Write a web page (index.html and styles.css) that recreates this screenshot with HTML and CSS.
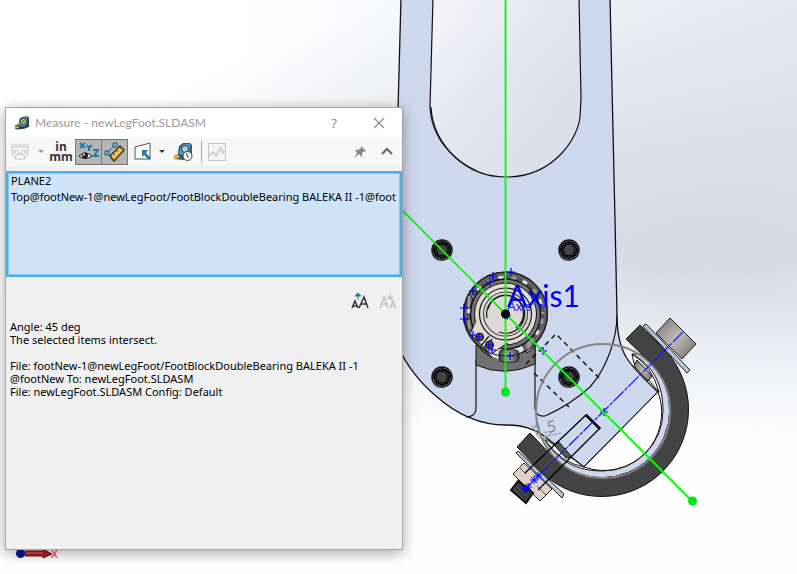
FILE: index.html
```html
<!DOCTYPE html>
<html lang="en">
<head>
<meta charset="utf-8">
<title>Measure - newLegFoot.SLDASM</title>
<link rel="stylesheet" href="styles.css">
</head>
<body>
<main class="viewport">
  <svg class="model" viewBox="0 0 797 574" preserveAspectRatio="xMinYMin slice" role="img" aria-label="Leg and foot assembly">
    <defs>
      <linearGradient id="metal" x1="0" y1="0" x2="1" y2="1"><stop offset="0" stop-color="#766f6c"/><stop offset=".5" stop-color="#c0b9b5"/><stop offset="1" stop-color="#6f6967"/></linearGradient>
      <linearGradient id="slot" x1="0" y1="0" x2="1" y2="1"><stop offset="0" stop-color="#f5f5f8"/><stop offset=".5" stop-color="#e2e5ee"/><stop offset="1" stop-color="#d9dce7"/></linearGradient>
      <linearGradient id="ball"><stop offset="0" stop-color="#3c3c3c"/><stop offset=".5" stop-color="#a5a5a5"/><stop offset="1" stop-color="#3c3c3c"/></linearGradient>
      <g id="screw">
        <circle r="10" fill="#cfd8ee" stroke="#111" stroke-width="1.5"/>
        <circle r="8" fill="#333" stroke="#000" stroke-width="2"/>
        <path d="M-3-5.5H3L6 0 3 5.500H-3L-6 0Z" fill="#444" stroke="#080808"/>
        <path d="M-10 3l2 5M-8 7l2 3M-5 10l2 1" stroke="#555" stroke-dasharray="1 1"/>
      </g>
      <path id="plus" d="M-4 0H4M0-4V4" stroke="#00f" stroke-width="1.200"/>
      <g id="star" stroke="#00f"><path d="M-4 0H4M0-4V4M-3-3 3 3M3-3-3 3"/></g>
    </defs>

    <path class="plate" d="M401-2 398 110V346C405 363 419 382 436 396C456 414 478 425 506 425C522 425 534 428 548 439L584 467 658 392C645 380 635 370 628 360C621 350 617 335 617 315L615 220 610-2Z"/>
    <path d="M433-2 430 107C431 126 439 143 455 157C470 171 486 177 506 177C529 177 548 168 562 153C573 141 579 127 580 117L581 98 579-2Z" fill="url(#slot)" stroke="#111" stroke-width="1.200"/>
    <path d="M431 107C432 127 440 143 456 158C463 164 470 168 477 171" class="edge"/>
    <path class="edge" d="M476 360V408Q476 417 466 417"/>
    <path class="edge" d="M535 335V407Q535 417 545 416Q570 405 590 387C607 368 617 338 617 315"/>

    <path d="M476 345V365Q505 378 535 364V340Z" fill="#707070" stroke="#111"/>
    <circle cx="505.500" cy="314" r="46" fill="none" stroke="#9299aa" stroke-width=".5" stroke-dasharray="1 11"/>
    <circle cx="505.500" cy="314" r="42" fill="#555" stroke="#111" stroke-width="1.200"/>
    <circle cx="505.500" cy="314" r="37" fill="none" stroke="#dce1ec" stroke-width="5" stroke-dasharray="5 20" stroke-dashoffset="8"/>
    <circle cx="505.500" cy="314" r="37" fill="none" stroke="#999" stroke-width="5" stroke-dasharray="5 20" stroke-dashoffset="20"/>
    <circle cx="505.500" cy="314" r="39.500" fill="none" stroke="#666" stroke-width="2"/>
    <path d="M479 345Q505 377 534 339L523 336Q507 350 487 342Z" fill="#dce0e8"/>
    <g stroke="#222"><rect x="499" y="350" width="20" height="12" rx="4" fill="url(#ball)"/><path d="M522 345 530 338 536 344Q532 350 527 353Z" fill="url(#ball)"/><path d="M465 319H471L473 330H468Z" fill="url(#ball)"/><path d="M468 294 473 298 470 308H465Z" fill="url(#ball)"/><path d="M478 345 486 350 492 358 482 351Z" fill="#555"/></g>
    <circle cx="505.500" cy="314" r="35" fill="#747474" stroke="#111" stroke-width="1.300"/>
    <circle cx="505.500" cy="314" r="42" fill="none" stroke="#222"/>
    <circle cx="505.500" cy="314" r="31" fill="#ded9d5" stroke="#111"/>
    <path d="M476 321 470 334 491 354 508 342 490 322Z" fill="#ded9d5"/>
    <path d="M476 321 470 334 491 354 508 343" fill="none" stroke="#222"/>
    <path d="M480 347 489 336M483 349 492 339" stroke="#222" stroke-width="1.300"/>
    <g fill="none" stroke="#151515" stroke-width="1.200">
      <circle cx="505.500" cy="314" r="26"/><circle cx="505.500" cy="314" r="22" stroke="#4a4a4a"/>
      <path d="M487 318A19 19 0 1 1 499 332M488 309A18 18 0 1 1 516 328"/>
    </g>
    <g fill="#555" stroke="#111"><circle cx="479.500" cy="337" r="4"/><circle cx="489.500" cy="345" r="4"/></g>

    <use href="#screw" x="442" y="250"/><use href="#screw" x="569" y="250"/>
    <use href="#screw" x="442" y="377"/><use href="#screw" x="569" y="377"/>
    <path d="M526 364 556 334 600 379M534 373 569 407" class="edge hidden"/>

    <path d="M658 392A58 58 0 0 1 584 467Z" fill="#fdfdfe" stroke="#111"/>
    <path d="M632 354Q652 366 659 392L634 363Z" fill="#f2f3f8" stroke="#111"/>
    <path d="M547 440 584 467Q561 463 545 440Z" fill="#f5f6fa" stroke="#111"/>
    <path d="M637 360 652 376 648 381 634 366Z" fill="url(#metal)" stroke="#111"/>
    <path d="M558 441 572 457 566 458 554 445Z" fill="#555" stroke="#111"/>
    <path d="M632 354C653 365 663 384 663 411A60 60 0 0 1 603 471C576 471 558 461 545 440L540 436 555 459A67.900 67.900 0 0 0 651 363L641 354Z" fill="#cdd7ed" stroke="#171717"/>
    <path d="M640 325 664.500 349.500A87 87 0 0 1 541.500 472.500L517 447 530 433 555 459A67.900 67.900 0 0 0 651 363L626 339Z" fill="#444" stroke="#111"/>
    <circle cx="603" cy="411" r="67" fill="none" stroke="#858585" stroke-width="2"/>

    <path d="M670 318 696 344 682 359 656 333Z" fill="url(#metal)" stroke="#222"/>
    <path d="M643 326 646 324 690 370 687 373Z" fill="#b8c4da" stroke="#222"/>
    <path d="M524 463 513 474 540 501 552 489Z" fill="#ded2cb" stroke="#222"/>
    <path d="M518 481 511 490 526 503 533 493Z" fill="#3c3c3c" stroke="#111" stroke-width="2"/>
    <path d="M519 467 526 474M537 486 546 495M517 487 526 496M514 489 523 499" stroke="#555"/>
    <path d="M518 451 564 494 562 498 516 453Z" fill="#b8c4da" stroke="#222"/>
    <path d="M525 473 586 415 600 428 538 490" fill="none" stroke="#000" stroke-width="1.300"/>
    <path d="M586 415 600 429" stroke="#000" stroke-width="2.500"/>
    <path d="M532 425l6 12M538 438l23-5M544 440l9-10" fill="none" stroke="#999"/>
    <text class="dimension" x="534" y="434" transform="rotate(-10 541 430)">1.5</text>
    <path d="M524 490 604 411 683 332" stroke="#1414f5" stroke-width="1.200" stroke-dasharray="14 2 3 2"/>

    <text class="axis-small" x="507" y="311">Axis</text>
    <text class="axis" x="507" y="307">Axis1</text>
    <g>
      <use href="#plus" x="511" y="272"/><use href="#plus" x="493" y="276"/><use href="#plus" x="490" y="282"/><use href="#plus" x="473" y="291"/><use href="#plus" x="464" y="308"/><use href="#plus" x="464" y="319"/><use href="#plus" x="473" y="335"/><use href="#plus" x="479" y="337"/><use href="#plus" x="489" y="345"/><use href="#plus" x="492" y="350"/><use href="#plus" x="510" y="356"/><use href="#plus" x="543" y="351"/><use href="#plus" x="604" y="412"/>
      <use href="#star" x="507" y="316"/><use href="#star" x="538" y="476"/><use href="#star" x="534" y="480"/><use href="#star" x="528" y="487"/><use href="#star" x="525" y="489"/>
    </g>
    <path d="M505.500 0V391M398 206 692 501" stroke="#0f0" stroke-width="1.800"/>
    <circle cx="505.500" cy="392" r="4.500" fill="#00e51b"/><circle cx="692.500" cy="501" r="4.500" fill="#00e51b"/>
    <circle cx="505.500" cy="314" r="4.500"/>
    <g><path d="M25 551H43V549L52 554 43 558V556H25Z" fill="#b51d1d" stroke="#701111"/><path d="M26 553H43" stroke="#e17777"/><circle cx="20.500" cy="553.500" r="4.500" fill="#101b87"/><path d="M17 551 24 556M23 549 18 557" stroke="#0000df"/><text class="triad" x="51" y="558">X</text></g>
  </svg>

  <section class="dialog" aria-labelledby="dialog-title">
    <header class="titlebar">
      <svg class="tape" viewBox="0 0 17 16"><path d="M1 14V11L5 9 6 3 10 1H15L16 3V12L11 14 4 15Z" fill="#24414e"/><path d="M5 9 7 3 10 2H14V9L11 12 5 11Z" fill="#4b93b6"/><circle cx="10" cy="6.500" r="3.200" fill="#e5c875" stroke="#243239"/><circle cx="10" cy="6.500" r="1.300" fill="#4c7180"/><path d="M1 13 5 12" fill="none" stroke="#e5ad33" stroke-width="2"/></svg>
      <h1 id="dialog-title">Measure - newLegFoot.SLDASM</h1>
      <button class="help" aria-label="Help">?</button>
      <button class="close" aria-label="Close"><svg viewBox="0 0 12 12"><path d="M1 1 11 11M11 1 1 11" fill="none" stroke="#888" stroke-width="1.200"/></svg></button>
    </header>
    <div class="toolbar">
      <button class="tool wide" aria-label="Arc and circle measurements"><svg viewBox="0 0 18 18"><g fill="none" stroke="#c5c5c5"><circle cx="4.500" cy="10" r="3"/><circle cx="13.500" cy="10" r="3"/><path d="M1 10V2H17V10M1 4H17M4.500 8V11M13.500 8V11M7 11h4M4 13V16H14V13"/></g></svg></button>
      <button class="arrow" aria-label="Arc options"><svg viewBox="0 0 6 4"><path d="M0 0H6L3 3Z" fill="#999"/></svg></button>
      <button class="tool units" aria-label="Units"><span>in</span><span>mm</span></button>
      <button class="tool active" aria-label="Show XYZ measurements" aria-pressed="true"><svg viewBox="0 0 24 22"><g fill="none" stroke="#267ba1" stroke-width="2"><path d="M3 2 8 7M8 2 3 7M10 4 12 7 15 4M12 7V10M16 9H21L17 15H22"/></g><path d="M2 15Q8 9 15 15 8 20 2 15Z" fill="#eee" stroke="#222"/><circle cx="8" cy="14.500" r="3" fill="#222"/><circle cx="7" cy="13.500" r="1" fill="#fff"/></svg></button>
      <button class="tool active last" aria-label="Point to point" aria-pressed="true"><svg viewBox="0 0 24 22"><path d="M7 15 17 5 21 9 11 20Z" fill="#f2c341" stroke="#3d3723" stroke-width="1.500"/><path d="M10 12l2 2M13 9l2 2M16 6l2 2" stroke="#554923"/><path d="M5 11 11 5" stroke="#225f7c"/><path d="M2 10H6V14H2ZM10 2H14V6H10Z" fill="#72b8d5" stroke="#185a7c"/></svg></button>
      <button class="tool" aria-label="Projected on"><svg viewBox="0 0 20 20"><path d="M2 5 17 1V17H2Z" fill="#fff" stroke="#555"/><path d="M9 8V15L11 13 16 18 18 16 13 11 15 8Z" fill="#287fa5"/></svg></button>
      <button class="arrow" aria-label="Projection options"><svg viewBox="0 0 6 4"><path d="M0 0H6L3 3Z" fill="#333"/></svg></button>
      <button class="tool history" aria-label="Measurement history"><svg viewBox="0 0 20 20"><path d="M1 17V14L5 12 6 4 10 1H17L19 3V15L11 18Z" fill="#31596b"/><path d="M6 12 8 4 11 2H17V11L12 14Z" fill="#4f9bbf"/><circle cx="12" cy="7" r="3.500" fill="#a7cedc" stroke="#293b42"/><path d="M1 16 6 14" fill="none" stroke="#e8b338" stroke-width="3"/><circle cx="14.500" cy="14" r="4.500" fill="#fff" stroke="#444"/><path d="M14 11V14L16 15" fill="none" stroke="#333"/></svg></button>
      <button class="tool sensor" aria-label="Create sensor"><svg viewBox="0 0 18 18"><rect x=".5" y=".5" width="17" height="17" fill="#f4f4f4" stroke="#c5c5c5"/><path d="M1 13 5 9 8 13 13 5 15 10 17 8" fill="none" stroke="#c5c5c5" stroke-width="1.500"/></svg></button>
      <button class="tool pin" aria-label="Pin"><svg viewBox="0 0 14 14"><path d="M8 1 13 6 10 7 9 9 9 12 6 9 1 13 4 8 2 5 5 5 8 3Z" fill="#888"/></svg></button>
      <button class="tool collapse" aria-label="Collapse"><svg viewBox="0 0 12 8"><path d="M1 6 6 1 11 6" fill="none" stroke="#666" stroke-width="2"/></svg></button>
    </div>
    <ul class="selection" aria-label="Selected items">
      <li>PLANE2</li>
      <li>Top@footNew-1@newLegFoot/FootBlockDoubleBearing BALEKA II -1@foot</li>
    </ul>
    <div class="font-tools">
      <button aria-label="Increase text size"><svg viewBox="0 0 18 16"><g fill="none" stroke="#333" stroke-width="1.500"><path d="M1 15 4 8 7 15M2 13H6M8 15 13 4 17 15M10 11H16"/></g><path d="M7 7V3M4 3 7 0 10 3Z" fill="#267a9d" stroke="#267a9d"/></svg></button>
      <button aria-label="Decrease text size"><svg viewBox="0 0 18 16"><g fill="none" stroke="#c3c3c3" stroke-width="1.500"><path d="M1 15 5 4 9 15M2 11H8M11 15 14 8 17 15M12 13H16"/></g><path d="M11 0V4M8 4H14L11 7Z" fill="#c3c3c3" stroke="#c3c3c3"/></svg></button>
    </div>
    <div class="result">
      <p>Angle: 45 deg<br>The selected items intersect.</p>
      <p>File: footNew-1@newLegFoot/FootBlockDoubleBearing BALEKA II -1<br>@footNew To: newLegFoot.SLDASM<br>File: newLegFoot.SLDASM Config: Default</p>
    </div>
  </section>
</main>
</body>
</html>
```
FILE: styles.css
```css
* { box-sizing: border-box; }
body { margin: 0; font: 11px/13px "Noto Sans", sans-serif; color: #000; }
.viewport {
  position: relative;
  min-height: 100vh;
  overflow: hidden;
  background:
    linear-gradient(rgba(255,255,255,0) 46%, #fefefe 78%),
    radial-gradient(ellipse at 88% 45%, #d6d8e4 0%, rgba(218,221,232,.75) 28%, rgba(228,232,240,0) 65%),
    linear-gradient(90deg, #fff 30%, #e6eaf2 100%);
}
.model { position: absolute; inset: 0; width: 100%; height: 100%; }
.plate { fill: #cdd7ee; stroke: #111; stroke-width: 1.3; }
.edge { fill: none; stroke: #151515; stroke-width: 1.2; }
.hidden { stroke-dasharray: 5 4; stroke-width: 1.5; }
.axis { font: 30px Lato, sans-serif; fill: #0000f5; }
.axis-small { font: 13px Lato, sans-serif; fill: #2222f5; }
.dimension { font: 16px Lato, sans-serif; fill: #888; }
.triad { font: 10px "Liberation Sans", sans-serif; fill: #e00; }
.dialog {
  position: absolute;
  left: 5px;
  top: 107px;
  width: 398px;
  min-height: 443px;
  background: #f0f0f0;
  border: 1px solid #a5a5a5;
  box-shadow: 0 3px 13px rgba(0,0,0,.35);
}
button { display: flex; align-items: center; justify-content: center; border: 0; padding: 0; background: none; color: inherit; font: inherit; }
.titlebar { display: flex; align-items: center; height: 30px; padding-left: 8px; background: #fff; }
.tape { width: 16px; height: 16px; margin-right: 5px; }
h1 { margin: 0; flex: 1; font: 12px/16px Lato, sans-serif; color: #999; white-space: nowrap; }
.help { width: 32px; height: 30px; font-size: 13px; color: #888; }
.close { width: 46px; height: 30px; margin-left: 6px; }
.close svg { width: 12px; }
.toolbar { display: flex; align-items: center; height: 28px; background: #f7f7f7; }
.tool { width: 24px; height: 26px; flex: none; }
.tool svg { width: 20px; height: 20px; }
.wide { width: 28px; }
.wide svg { width: 18px; }
.arrow { width: 13px; height: 26px; }
.arrow svg { width: 6px; height: 4px; }
.units { flex-direction: column; width: 28px; font: bold 12px/10px "Open Sans", sans-serif; color: #333; }
.active { width: 27px; background: #b5b5b5; border: 1px solid #777; }
.active svg { width: 24px; height: 22px; }
.last { margin-left: -1px; margin-right: 3px; }
.history { width: 30px; }
.sensor { width: 31px; height: 22px; margin-left: 3px; border-left: 1px solid #aaa; }
.sensor svg { width: 18px; height: 18px; }
.pin { margin-left: auto; }
.pin svg { width: 14px; }
.collapse { margin: 0 3px; }
.collapse svg { width: 12px; }
.selection { height: 106px; margin: 5px 0 0; padding: 0 0 0 3px; list-style: none; overflow: hidden; line-height: 16px; white-space: nowrap; background: #cfe4f8; border: 2px solid #4faee0; outline: 1px solid #86c5ed; outline-offset: -3px; }
.font-tools { display: flex; justify-content: flex-end; gap: 10px; padding: 16px 5px 0; }
.font-tools svg { width: 18px; height: 16px; }
.result { padding: 11px 4px; }
.result p { margin: 0 0 13px; }
```
